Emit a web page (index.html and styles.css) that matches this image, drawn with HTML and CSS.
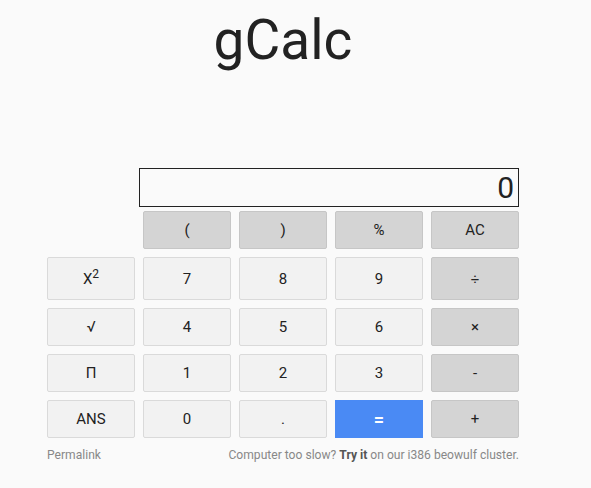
FILE: index.html
```html
<!DOCTYPE html>
<html>
<head>
<meta charset="utf-8">
<link rel="stylesheet" href="styles.css">
</head>
<body>
<div class="page">
  <h1 class="title">gCalc</h1>
  <div class="calc">
    <div class="display">0</div>
    <button class="key dark c2">(</button>
    <button class="key dark">)</button>
    <button class="key dark">%</button>
    <button class="key dark">AC</button>

    <button class="key">X<sup>2</sup></button>
    <button class="key">7</button>
    <button class="key">8</button>
    <button class="key">9</button>
    <button class="key dark">÷</button>

    <button class="key">√</button>
    <button class="key">4</button>
    <button class="key">5</button>
    <button class="key">6</button>
    <button class="key dark">×</button>

    <button class="key">Π</button>
    <button class="key">1</button>
    <button class="key">2</button>
    <button class="key">3</button>
    <button class="key dark">-</button>

    <button class="key">ANS</button>
    <button class="key">0</button>
    <button class="key">.</button>
    <button class="key eq">=</button>
    <button class="key dark">+</button>
  </div>
  <div class="footer">
    <span class="link">Permalink</span>
    <span class="note">Computer too slow? <b>Try it</b> on our i386 beowulf cluster.</span>
  </div>
</div>
</body>
</html>
```

FILE: styles.css
```css
html, body {
  margin: 0;
  padding: 0;
  background: #fafafa;
}
body {
  font-family: Roboto, "Noto Sans", sans-serif;
  color: #222;
}
.page {
  width: 472px;
  margin-left: 47px;
  padding-top: 9px;
}
.title {
  margin: 0;
  height: 159px;
  text-align: center;
  font-weight: 400;
  font-size: 55px;
  line-height: 62px;
  color: #222;
}
.calc {
  display: grid;
  grid-template-columns: repeat(5, 88px);
  grid-template-rows: auto 38px 43px 38px 38px 38px;
  column-gap: 8px;
  row-gap: 8px;
}
.display {
  grid-column: 2 / 6;
  align-self: start;
  height: 39px;
  margin-left: -4px;
  margin-bottom: -4px;
  border: 1px solid #222;
  background: #fafafa;
  box-sizing: border-box;
  text-align: right;
  font-size: 30px;
  line-height: 37px;
  padding-right: 4px;
  color: #222;
}
.key {
  margin: 0;
  padding: 0;
  font-family: Roboto, "Noto Sans", sans-serif;
  font-size: 15px;
  color: #222;
  background: #f2f2f2;
  border: 1px solid #dadada;
  border-radius: 2px;
  box-sizing: border-box;
}
.key sup {
  font-size: 12px;
  line-height: 0;
}
.c2 {
  grid-column: 2;
}
.dark {
  background: #d4d4d4;
  border-color: #c6c6c6;
}
.eq {
  background: #4a8af4;
  border-color: #4a8af4;
  border-radius: 0;
  color: #fff;
  font-weight: 700;
  font-size: 18px;
}
.footer {
  display: flex;
  justify-content: space-between;
  margin-top: 9px;
  font-size: 12.1px;
  line-height: 16px;
  color: #888;
}
.footer b {
  color: #555;
}
```
